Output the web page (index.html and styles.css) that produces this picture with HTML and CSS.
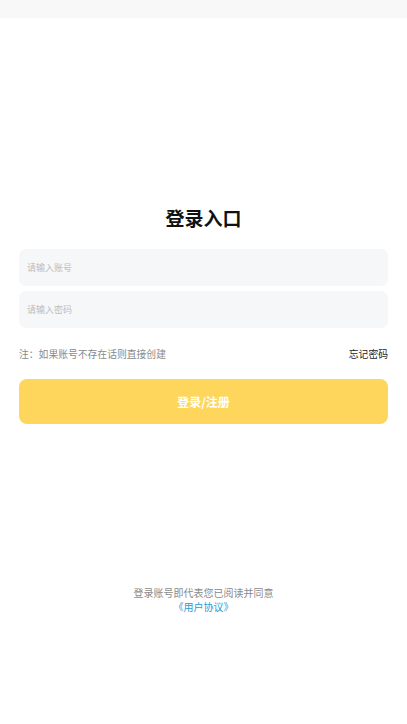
FILE: index.html
```html
<!DOCTYPE html>
<html lang="zh-CN">
<head>
    <meta charset="UTF-8">
    <meta name="viewport" content="width=device-width, initial-scale=1.0">
    <title>登录</title>
    <link rel="stylesheet" href="styles.css">
</head>
<body>
    <div class="status-bar"></div>
    <div class="page">
        <h1 class="title">登录入口</h1>

        <form class="login-form">
            <div class="field">
                <input type="text" name="account" placeholder="请输入账号">
            </div>
            <div class="field">
                <input type="password" name="password" placeholder="请输入密码">
            </div>

            <div class="tips">
                <span class="tips-note">注：如果账号不存在话则直接创建</span>
                <a class="forget" href="#">忘记密码</a>
            </div>

            <button type="submit" class="submit-btn">登录/注册</button>
        </form>

        <div class="agreement">
            <p>登录账号即代表您已阅读并同意</p>
            <a href="#">《用户协议》</a>
        </div>
    </div>
</body>
</html>
```

FILE: styles.css
```css
body {
    margin: 0;
    padding: 0;
    background-color: #fff;
    font-family: "Noto Sans CJK SC", "Noto Sans", sans-serif;
    color: #111;
}

.status-bar {
    height: 18px;
    background-color: #f8f8f8;
}

.page {
    padding: 0 19px;
}

.title {
    margin: 187px 0 0;
    text-align: center;
    font-size: 19px;
    line-height: 26px;
    font-weight: bold;
    color: #111;
}

.login-form {
    margin-top: 18px;
}

.field {
    margin-bottom: 5px;
}

.field input {
    display: block;
    width: 100%;
    height: 37px;
    box-sizing: border-box;
    padding: 0 8px;
    border: none;
    border-radius: 7px;
    background-color: #f6f7f9;
    font-family: inherit;
    font-size: 9px;
    color: #333;
    outline: none;
}

.field input::placeholder {
    color: #bdbdbd;
}

.tips {
    display: flex;
    justify-content: space-between;
    align-items: center;
    margin-top: 14px;
    height: 24px;
    font-size: 9.8px;
}

.tips-note {
    color: #8a8a8a;
}

.forget {
    color: #222;
    text-decoration: none;
}

.submit-btn {
    display: block;
    width: 100%;
    height: 45px;
    margin-top: 13px;
    border: none;
    border-radius: 8px;
    background-color: #fdd65b;
    color: #fff;
    font-family: inherit;
    font-size: 12px;
    font-weight: bold;
    cursor: pointer;
}

.agreement {
    margin-top: 162px;
    text-align: center;
    font-size: 10px;
    line-height: 14px;
}

.agreement p {
    margin: 0;
    color: #8a8a8a;
}

.agreement a {
    color: #2a9bd8;
    text-decoration: none;
}
```
